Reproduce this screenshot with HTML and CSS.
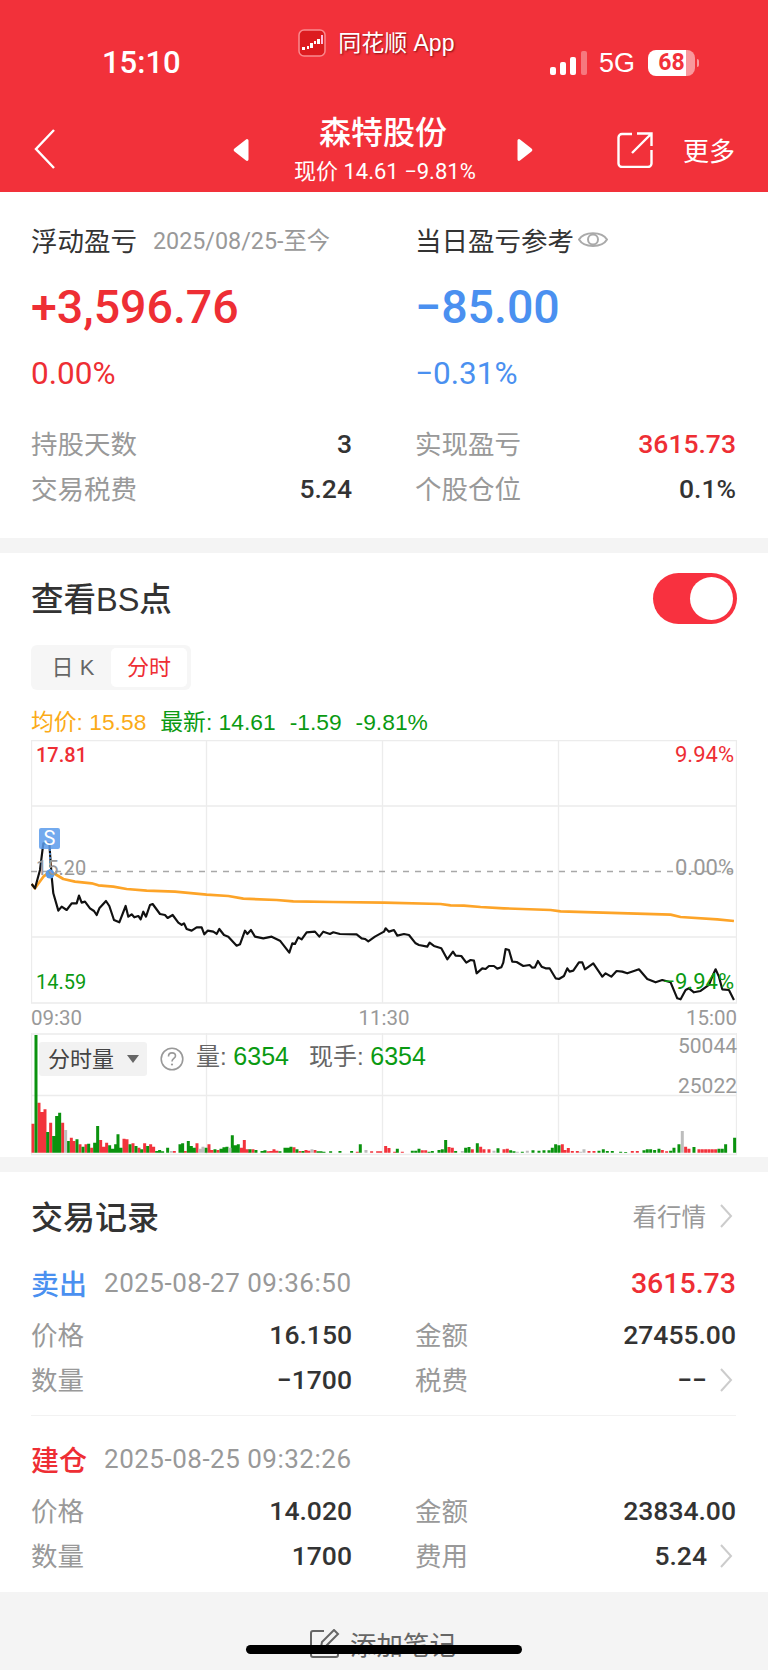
FILE: index.html
```html
<!DOCTYPE html>
<html lang="zh-CN">
<head>
    <meta charset="UTF-8">
    <meta name="viewport" content="width=device-width, initial-scale=1.0">
    <title>森特股份</title>
    <link rel="stylesheet" href="styles.css">
</head>
<body>
    <div class="page">
        <header class="top">
            <div class="status-bar">
                <span class="clock">15:10</span>
                <div class="app-tag">
                    <svg class="app-logo" width="28" height="28" viewBox="0 0 28 28">
                        <rect x="1" y="1" width="26" height="26" rx="5" fill="#dc1c20" stroke="#f98a8e" stroke-width="1.5"/>
                        <path d="M4 18h3v3H4zM9 17h2v3H9zM12 14h3v5h-3zM16 12h2v3h-2zM19 10h3v5h-3z" fill="#fff"/>
                        <path d="M23 6h2v9h-2z" fill="#fbd"/>
                    </svg>
                    <span class="app-name">同花顺 App</span>
                </div>
                <div class="sys-icons">
                    <div class="signal">
                        <i class="sig1"></i><i class="sig2"></i><i class="sig3"></i><i class="sig4"></i>
                    </div>
                    <span class="net">5G</span>
                    <div class="battery"><span>68</span></div>
                    <i class="battery-nub"></i>
                </div>
            </div>
            <nav class="nav-bar">
                <svg class="back" width="24" height="42" viewBox="0 0 24 42"><path d="M21 2 3 21l18 19" fill="none" stroke="#fff" stroke-width="2.4"/></svg>
                <div class="stock-title">
                    <svg class="tri" width="16" height="24" viewBox="0 0 16 24"><path d="M13 1.500 1.500 10.500a2 2 0 0 0 0 3L13 22.500a1.500 1.500 0 0 0 2.500-1.200V2.700A1.500 1.500 0 0 0 13 1.500z" fill="#fff"/></svg>
                    <div class="stock-name">
                        <div class="name">森特股份</div>
                        <div class="price">现价 14.61 −9.81%</div>
                    </div>
                    <svg class="tri" width="16" height="24" viewBox="0 0 16 24"><path d="M3 1.500l11.500 9a2 2 0 0 1 0 3L3 22.500a1.500 1.500 0 0 1-2.500-1.200V2.700A1.500 1.500 0 0 1 3 1.500z" fill="#fff"/></svg>
                </div>
                <svg class="share" width="36" height="36" viewBox="0 0 36 36"><path d="M15 2H5a3.500 3.500 0 0 0-3.500 3.500v26A3.500 3.500 0 0 0 5 35h26a3.500 3.500 0 0 0 3.500-3.500V18M15 21 34.500 1.500M20 1.500h14.500V14" fill="none" stroke="#fff" stroke-width="2.400"/></svg>
                <span class="more">更多</span>
            </nav>
        </header>

        <section class="summary">
            <div class="stat-col">
                <div class="stat-title">浮动盈亏<span class="since">2025/08/25-至今</span></div>
                <div class="big up">+3,596.76</div>
                <div class="pct up">0.00%</div>
                <div class="rows">
                    <div class="kv"><span class="k">持股天数</span><span class="v">3</span></div>
                    <div class="kv"><span class="k">交易税费</span><span class="v">5.24</span></div>
                </div>
            </div>
            <div class="stat-col">
                <div class="stat-title">当日盈亏参考
                    <svg class="eye" width="30" height="21" viewBox="0 0 30 21"><path d="M1 10.500C6 2 24 2 29 10.500 24 19 6 19 1 10.500z" fill="none" stroke="#aaa" stroke-width="2"/><circle cx="15" cy="10.500" r="5" fill="none" stroke="#aaa" stroke-width="2"/></svg>
                </div>
                <div class="big down">−85.00</div>
                <div class="pct down">−0.31%</div>
                <div class="rows">
                    <div class="kv"><span class="k">实现盈亏</span><span class="v up">3615.73</span></div>
                    <div class="kv"><span class="k">个股仓位</span><span class="v">0.1%</span></div>
                </div>
            </div>
        </section>

        <section class="bs">
            <div class="bs-head">
                <h2 class="bs-title">查看BS点</h2>
                <div class="switch"><i></i></div>
            </div>
            <div class="tabs">
                <span class="tab">日 K</span>
                <span class="tab active">分时</span>
            </div>
            <div class="legend">
                <span class="avg">均价: 15.58</span>
                <span class="now">最新: 14.61</span>
                <span class="now">-1.59</span>
                <span class="now">-9.81%</span>
            </div>

            <div class="chart">
                <svg width="706" height="264" viewBox="31 740 706 264">
                    <path d="M31 740.500H737M31 806H737M31 937H737M31 1003H737M31.500 740V1003M206.500 740V1003M382.500 740V1003M558.500 740V1003M736.500 740V1003" fill="none" stroke="#ececec" stroke-width="1.300"/>
                    <path d="M31 871.500H737" stroke="#a8a8a8" stroke-width="1.300" stroke-dasharray="6 6"/>
                    <g transform="translate(0 780) scale(.3333)" fill="none" stroke-linejoin="round">
                        <polyline class="avg-line" points="95,312 105,325 130,290 150,275 165,282 190,297 225,305 275,310 295,316 340,320 380,327 440,332 525,335 620,344 685,348 730,356 830,360 880,364 1000,366 1152,368 1322,372 1352,376 1392,377 1442,381 1512,385 1652,390 1682,394 2012,404 2042,411 2152,418 2202,423"/>
                        <polyline class="price-line" points="95,312 105,325 120,270 130,190 148,190 155,290 160,340 175,392 185,380 200,390 215,370 230,370 237,347 245,368 255,365 270,385 282,393 290,405 298,385 318,363 328,378 342,420 358,427 377,378 385,410 395,403 403,412 415,408 422,418 430,395 438,410 450,375 458,372 480,402 495,405 503,414 518,405 535,428 545,435 552,430 560,447 575,452 590,442 605,442 613,463 623,452 640,455 650,462 658,447 672,465 685,470 710,497 720,493 735,452 742,462 753,450 765,470 790,475 815,470 840,482 868,518 877,490 885,492 895,472 905,478 920,457 945,455 958,470 970,455 990,462 1000,457 1020,462 1070,463 1085,475 1095,477 1105,484 1125,470 1152,455 1157,445 1167,455 1182,450 1192,467 1212,462 1227,465 1247,490 1257,495 1282,500 1289,488 1302,498 1324,505 1342,538 1359,515 1367,527 1384,528 1399,548 1412,540 1422,542 1430,580 1447,565 1457,567 1467,558 1482,558 1492,566 1504,562 1510,548 1517,507 1527,510 1537,545 1550,546 1570,558 1589,555 1597,563 1605,562 1614,543 1625,560 1637,565 1649,565 1667,595 1677,597 1692,588 1702,565 1709,575 1720,572 1737,547 1747,547 1755,568 1780,550 1807,590 1817,580 1834,590 1850,573 1867,575 1882,580 1902,573 1917,568 1942,597 1967,607 1987,600 2012,607 2032,655 2042,658 2057,630 2067,625 2082,637 2102,633 2127,615 2137,590 2147,568 2157,590 2167,628 2187,630 2202,660"/>
                    </g>
                    <path d="M50 849V874" stroke="#4a90e2" stroke-width="1.600" stroke-dasharray="2 2"/>
                    <circle cx="50" cy="874" r="4.500" fill="#5b9be8"/>
                </svg>
                <span class="chart-label tl up">17.81</span>
                <span class="chart-label tr up">9.94%</span>
                <span class="chart-label ml muted">15.20</span>
                <span class="chart-label mr muted">0.00%</span>
                <span class="chart-label bl green">14.59</span>
                <span class="chart-label br green">−9.94%</span>
                <span class="marker">S</span>
            </div>

            <div class="axis"><span>09:30</span><span>11:30</span><span>15:00</span></div>

            <div class="vol">
                <svg width="706" height="124" viewBox="31 1033 706 124">
                    <path d="M31 1034H737M31 1095.500H737M31 1154.500H737M31.500 1033V1155M206.500 1033V1155M382.500 1033V1155M558.500 1033V1155M736.500 1033V1155" fill="none" stroke="#ececec" stroke-width="1.300"/>
                    <g transform="translate(0 1030) scale(.3333)" stroke-width="9" fill="none">
                        <path class="bar-r" d="M99 368v-87M117 368v-150M126 368v-122M135 368v-130M152 368v-90M188 368v-90M214 368v-45M222 368v-35M240 368v-25M258 368v-25M275 368v-15M302 368v-38M311 368v-18M320 368v-30M372 368v-42M381 368v-40M399 368v-28M417 368v-15M434 368v-28M452 368v-25M461 368v-18M523 368v-5M556 368v-5M591 368v-28M627 368v-25M636 368v-8M654 368v-8M724 368v-15M733 368v-38M742 368v-10M759 368v-10M804 368v-4M813 368v-5M822 368v-10M831 368v-6M882 368v-16M900 368v-5M918 368v-8M927 368v-6M945 368v-8M1072 368v-3M1115 368v-4M1133 368v-4M1142 368v-4"/>
                        <path class="bar-g" d="M108 368v-353M143 368v-62M161 368v-50M170 368v-110M179 368v-120M205 368v-35M231 368v-40M249 368v-18M266 368v-27M284 368v-30M293 368v-80M329 368v-22M338 368v-12M347 368v-25M354 368v-55M363 368v-15M390 368v-25M408 368v-20M425 368v-10M443 368v-20M470 368v-5M479 368v-8M488 368v-4M503 368v-15M540 368v-25M548 368v-28M565 368v-35M574 368v-20M583 368v-15M618 368v-15M645 368v-10M663 368v-12M672 368v-16M681 368v-18M697 368v-52M706 368v-22M715 368v-25M750 368v-10M768 368v-8M786 368v-5M795 368v-7M840 368v-4M855 368v-15M864 368v-15M873 368v-18M891 368v-10M909 368v-5M954 368v-4M963 368v-4M972 368v-3M992 368v-4M1020 368v-5M1055 368v-5M1081 368v-25"/>
                        <path class="bar-n" d="M197 368v-68M514 368v-5M600 368v-12M609 368v-18M690 368v-15M936 368v-10M1098 368v-8"/>
                    </g>
                    <g transform="translate(384 1030) scale(.3333)" stroke-width="9" fill="none">
                        <path class="bar-r" d="M5 368v-20M15 368v-14M32 368v-3M55 368v-3M115 368v-7M125 368v-7M195 368v-17M205 368v-15M265 368v-10M290 368v-18M300 368v-10M315 368v-10M360 368v-10M370 368v-12M535 368v-25M543 368v-8M553 368v-14M565 368v-5M580 368v-5M615 368v-5M630 368v-5M745 368v-5M760 368v-5M835 368v-8M848 368v-4M905 368v-18M915 368v-12M945 368v-10M955 368v-10M965 368v-10M975 368v-10M985 368v-10M995 368v-10"/>
                        <path class="bar-g" d="M40 368v-12M85 368v-6M95 368v-6M105 368v-12M135 368v-3M145 368v-5M165 368v-8M175 368v-10M185 368v-38M215 368v-5M245 368v-15M255 368v-17M280 368v-28M342 368v-13M380 368v-7M390 368v-4M415 368v-3M447 368v-7M465 368v-6M480 368v-7M495 368v-7M505 368v-15M515 368v-25M525 368v-22M645 368v-6M658 368v-10M670 368v-5M685 368v-5M710 368v-3M725 368v-2M780 368v-7M790 368v-10M800 368v-10M812 368v-8M825 368v-12M860 368v-6M870 368v-15M885 368v-25M930 368v-17M1005 368v-12M1015 368v-12M1025 368v-25M1052 368v-45"/>
                        <path class="bar-n" d="M235 368v-5M330 368v-6M400 368v-3M430 368v-6M590 368v-3M600 368v-10M895 368v-65"/>
                    </g>
                </svg>
                <div class="vol-info">
                    <span class="vol-select">分时量<i class="caret"></i></span>
                    <svg class="help" width="24" height="24" viewBox="0 0 24 24"><circle cx="12" cy="12" r="10.800" fill="none" stroke="#999" stroke-width="1.600"/><path d="M8.500 9.500c0-5 7-4.500 7-.5 0 2.500-3.500 2.500-3.500 5.500" fill="none" stroke="#999" stroke-width="1.600"/><circle cx="12" cy="17.500" r="1.100" fill="#999"/></svg>
                    <span class="vol-item">量: <b>6354</b></span>
                    <span class="vol-item">现手: <b>6354</b></span>
                </div>
                <span class="vol-scale top-scale">50044</span>
                <span class="vol-scale mid-scale">25022</span>
            </div>
        </section>

        <section class="trades">
            <div class="trades-head">
                <h2 class="trades-title">交易记录</h2>
                <span class="quote-link">看行情
                    <svg class="chev" width="14" height="24" viewBox="0 0 14 24"><path d="M2 1l10 11L2 23" fill="none" stroke="#ccc" stroke-width="2"/></svg>
                </span>
            </div>

            <div class="trade">
                <div class="trade-head">
                    <span class="kind down">卖出</span>
                    <span class="when">2025-08-27 09:36:50</span>
                    <span class="profit up">3615.73</span>
                </div>
                <div class="trade-grid">
                    <div class="kv"><span class="k">价格</span><span class="v">16.150</span></div>
                    <div class="kv"><span class="k">金额</span><span class="v">27455.00</span></div>
                    <div class="kv"><span class="k">数量</span><span class="v">−1700</span></div>
                    <div class="kv"><span class="k">税费</span><span class="v">−−<svg class="chev" width="14" height="24" viewBox="0 0 14 24"><path d="M2 1l10 11L2 23" fill="none" stroke="#ccc" stroke-width="2"/></svg></span></div>
                </div>
            </div>

            <div class="divider"></div>

            <div class="trade second">
                <div class="trade-head">
                    <span class="kind up">建仓</span>
                    <span class="when">2025-08-25 09:32:26</span>
                </div>
                <div class="trade-grid">
                    <div class="kv"><span class="k">价格</span><span class="v">14.020</span></div>
                    <div class="kv"><span class="k">金额</span><span class="v">23834.00</span></div>
                    <div class="kv"><span class="k">数量</span><span class="v">1700</span></div>
                    <div class="kv"><span class="k">费用</span><span class="v">5.24<svg class="chev" width="14" height="24" viewBox="0 0 14 24"><path d="M2 1l10 11L2 23" fill="none" stroke="#ccc" stroke-width="2"/></svg></span></div>
                </div>
            </div>
        </section>

        <footer class="note-bar">
            <svg width="30" height="29" viewBox="0 0 30 29"><path d="M14 2H3a2 2 0 0 0-2 2v22a2 2 0 0 0 2 2h23a2 2 0 0 0 2-2V16M11 18l1-5L24 1l4 4-12 12z" fill="none" stroke="#666" stroke-width="2"/></svg>
            <span>添加笔记</span>
        </footer>
        <div class="home-bar"></div>
    </div>
</body>
</html>
```

FILE: styles.css
```css
* {
    box-sizing: border-box;
}
body {
    margin: 0;
    background-color: #f4f4f4;
    font-family: Roboto, "Noto Sans CJK SC", sans-serif;
    color: #333;
}
h2 {
    margin: 0;
    font-weight: 500;
}
.page {
    position: relative;
    width: 768px;
    height: 1670px;
    overflow: hidden;
}
.up {
    color: #ee2e34;
}
.down {
    color: #4a90f0;
}
.green {
    color: #0a9a12;
}
.muted {
    color: #999;
}

/* red header */
.top {
    height: 192px;
    background-color: #f2313a;
    color: white;
}
.status-bar {
    position: relative;
    display: flex;
    justify-content: space-between;
    height: 110px;
    padding: 0 69px 0 102px;
}
.clock {
    margin-top: 44px;
    font-size: 31px;
    line-height: 38px;
    font-weight: 500;
}
.app-tag {
    display: flex;
    align-items: center;
    gap: 12px;
    height: 30px;
    margin-top: 28px;
    margin-left: 22px;
}
.app-name {
    font-family: "Liberation Sans", "Noto Sans CJK SC", sans-serif;
    font-size: 23px;
    line-height: 30px;
    text-shadow: 1px 1px 2px rgba(90, 0, 0, 0.7);
}
.sys-icons {
    display: flex;
    align-items: center;
    height: 28px;
    margin-top: 49px;
}
.signal {
    display: flex;
    align-items: flex-end;
    gap: 4px;
    height: 24px;
    margin-right: 12px;
}
.signal i {
    width: 6px;
    border-radius: 2px;
    background-color: white;
}
.sig1 { height: 8px; }
.sig2 { height: 13px; }
.sig3 { height: 18px; }
.signal .sig4 {
    height: 24px;
    margin-left: 1px;
    background-color: rgba(255, 255, 255, 0.35);
}
.net {
    font-family: "Liberation Sans", sans-serif;
    font-size: 27px;
    line-height: 28px;
    margin-right: 13px;
}
.battery {
    width: 47px;
    height: 26px;
    border-radius: 8px;
    background: linear-gradient(90deg, white 38px, rgba(255, 255, 255, 0.5) 38px);
    color: #f2313a;
    font-size: 23px;
    font-weight: 700;
    line-height: 26px;
    text-align: center;
}
.battery-nub {
    width: 2px;
    height: 8px;
    margin-left: 2px;
    border-radius: 0 2px 2px 0;
    background-color: rgba(255, 255, 255, 0.5);
}
.nav-bar {
    position: relative;
    display: flex;
    align-items: center;
    height: 82px;
    padding: 0 32px 0 33px;
}
.back {
    margin-top: -5px;
}
.stock-title {
    display: flex;
    align-items: center;
    gap: 44px;
    margin-left: 176px;
}
.stock-name {
    width: 180px;
    text-align: center;
}
.tri {
    margin-top: -2px;
}
.name {
    margin-top: -5px;
    font-size: 32px;
    line-height: 44px;
    font-weight: 500;
}
.price {
    position: relative;
    left: 1px;
    margin-top: 3px;
    font-size: 22px;
    line-height: 28px;
    white-space: nowrap;
}
.share {
    margin-left: 84px;
    margin-top: -2px;
}
.more {
    margin-left: 30px;
    margin-top: -4px;
    font-size: 26px;
}

/* profit summary */
.summary {
    display: grid;
    grid-template-columns: 321px 321px;
    column-gap: 63px;
    height: 346px;
    padding: 27px 32px 0 31px;
    background-color: white;
}
.stat-title {
    display: flex;
    align-items: center;
    height: 40px;
    font-size: 26.500px;
    white-space: nowrap;
}
.since {
    margin-left: 16px;
    font-size: 23.300px;
    color: #999;
}
.eye {
    margin-left: 4px;
}
.big {
    height: 60px;
    margin-top: 18px;
    font-size: 46.500px;
    line-height: 60px;
    font-weight: 500;
}
.pct {
    height: 40px;
    margin-top: 17px;
    font-size: 31.500px;
    line-height: 40px;
}
.rows {
    margin-top: 27px;
}
.kv {
    display: flex;
    justify-content: space-between;
    align-items: center;
    height: 45px;
}
.k {
    margin-bottom: 3px;
    font-size: 26.500px;
    color: #999;
}
.v {
    display: flex;
    align-items: center;
    font-size: 26.500px;
    font-weight: 500;
}
.chev {
    margin: 0 3px 0 12px;
}

/* BS points and chart */
.bs {
    height: 604px;
    margin-top: 15px;
    padding-top: 20px;
    background-color: white;
}
.bs-head {
    display: flex;
    justify-content: space-between;
    align-items: center;
    height: 51px;
    padding: 0 31px;
}
.bs-title,
.legend,
.tabs {
    font-family: "Liberation Sans", "Noto Sans CJK SC", sans-serif;
}
.bs-title {
    margin-bottom: 5px;
    font-size: 32.500px;
    font-weight: 500;
}
.switch {
    display: flex;
    justify-content: flex-end;
    align-items: center;
    width: 84px;
    height: 51px;
    padding-right: 4px;
    border-radius: 26px;
    background-color: #f8313f;
}
.switch i {
    width: 43px;
    height: 43px;
    border-radius: 50%;
    background-color: white;
}
.tabs {
    display: flex;
    width: 160px;
    height: 45px;
    margin: 21px 0 0 31px;
    padding: 3px 4px;
    border-radius: 6px;
    background-color: #f6f6f6;
}
.tab {
    flex: 1;
    border-radius: 5px;
    font-size: 22px;
    line-height: 39px;
    text-align: center;
    color: #666;
}
.tab.active {
    flex: 0 0 76px;
    background-color: white;
    color: #ee2e34;
}
.legend {
    display: flex;
    gap: 14px;
    height: 32px;
    margin: 16px 0 0 31px;
    font-size: 22.800px;
    line-height: 32px;
}
.avg {
    color: #fbab18;
}
.now {
    color: #0a9a12;
}
.chart {
    position: relative;
    width: 706px;
    height: 264px;
    margin: 2px 0 0 31px;
}
.chart svg,
.vol svg {
    display: block;
}
.avg-line {
    stroke: #fda428;
    stroke-width: 8;
}
.price-line {
    stroke: #111;
    stroke-width: 6.500;
}
.chart-label {
    position: absolute;
    font-size: 22px;
    line-height: 28px;
}
.tl { left: 5px; top: 1px; font-size: 20px; font-weight: 500; }
.tr { right: 3px; top: 1px; }
.ml { left: 5px; top: 114px; font-size: 20px; }
.mr { right: 3px; top: 114px; }
.bl { left: 5px; top: 228px; font-size: 20px; }
.br { right: 3px; top: 228px; }
.marker {
    position: absolute;
    left: 8px;
    top: 88px;
    width: 21px;
    height: 21px;
    border-radius: 2px;
    background-color: rgba(90, 155, 235, 0.85);
    color: white;
    font-size: 20px;
    line-height: 21px;
    text-align: center;
}
.axis {
    display: flex;
    justify-content: space-between;
    width: 706px;
    height: 28px;
    margin-left: 31px;
    font-size: 20.500px;
    line-height: 28px;
    color: #999;
}
.vol {
    position: relative;
    width: 706px;
    height: 124px;
    margin: 1px 0 0 31px;
}
.bar-r { stroke: #f2333c; }
.bar-g { stroke: #0a920e; }
.bar-n { stroke: #bdbdbd; }
.vol-info {
    position: absolute;
    left: 8px;
    top: 9px;
    display: flex;
    align-items: center;
    height: 34px;
    font-family: "Liberation Sans", "Noto Sans CJK SC", sans-serif;
    font-size: 24px;
}
.vol-select {
    display: flex;
    align-items: center;
    width: 108px;
    height: 34px;
    padding: 0 0 5px 9px;
    border-radius: 3px;
    background-color: #f2f2f2;
    color: #444;
    font-size: 22px;
}
.caret {
    width: 0;
    height: 0;
    margin: 4px 0 0 13px;
    border-top: 8px solid #666;
    border-left: 6px solid transparent;
    border-right: 6px solid transparent;
}
.help {
    margin: 0 12px 1px 13px;
}
.vol-item {
    height: 34px;
    margin-right: 20px;
    line-height: 29px;
    color: #666;
}
.vol-item b {
    font-size: 25px;
    font-weight: 400;
    color: #0a9a12;
}
.vol-scale {
    position: absolute;
    right: 0;
    font-size: 21px;
    line-height: 26px;
    color: #999;
}
.top-scale { top: 0; }
.mid-scale { top: 40px; }

/* trade records */
.trades {
    height: 420px;
    margin-top: 15px;
    padding: 23px 32px 0 31px;
    background-color: white;
}
.trades-head {
    display: flex;
    justify-content: space-between;
    align-items: center;
    height: 40px;
}
.trades-title {
    font-size: 32px;
}
.quote-link {
    display: flex;
    align-items: center;
    font-size: 24.500px;
    color: #999;
}
.quote-link .chev {
    margin-left: 13px;
    margin-top: 2px;
}
.trade {
    margin-top: 28px;
}
.trade-head {
    display: flex;
    align-items: center;
    height: 40px;
    margin-bottom: 9px;
}
.kind {
    font-size: 28px;
    font-weight: 500;
}
.when {
    margin-left: 17px;
    font-size: 26px;
    letter-spacing: 0.5px;
    color: #999;
}
.profit {
    margin-left: auto;
    font-size: 28.500px;
    font-weight: 500;
}
.trade-grid {
    display: grid;
    grid-template-columns: 321px 321px;
    column-gap: 63px;
}
.divider {
    height: 1px;
    margin-top: 13px;
    background-color: #f2f2f2;
}
.trade.second {
    margin-top: 23px;
}

/* bottom */
.note-bar {
    display: flex;
    justify-content: center;
    align-items: center;
    gap: 10px;
    height: 30px;
    margin-top: 36px;
    padding-right: 2px;
    font-size: 26.500px;
    color: #666;
}
.home-bar {
    position: absolute;
    left: 246px;
    top: 1645px;
    width: 276px;
    height: 9px;
    border-radius: 5px;
    background-color: black;
}
```
